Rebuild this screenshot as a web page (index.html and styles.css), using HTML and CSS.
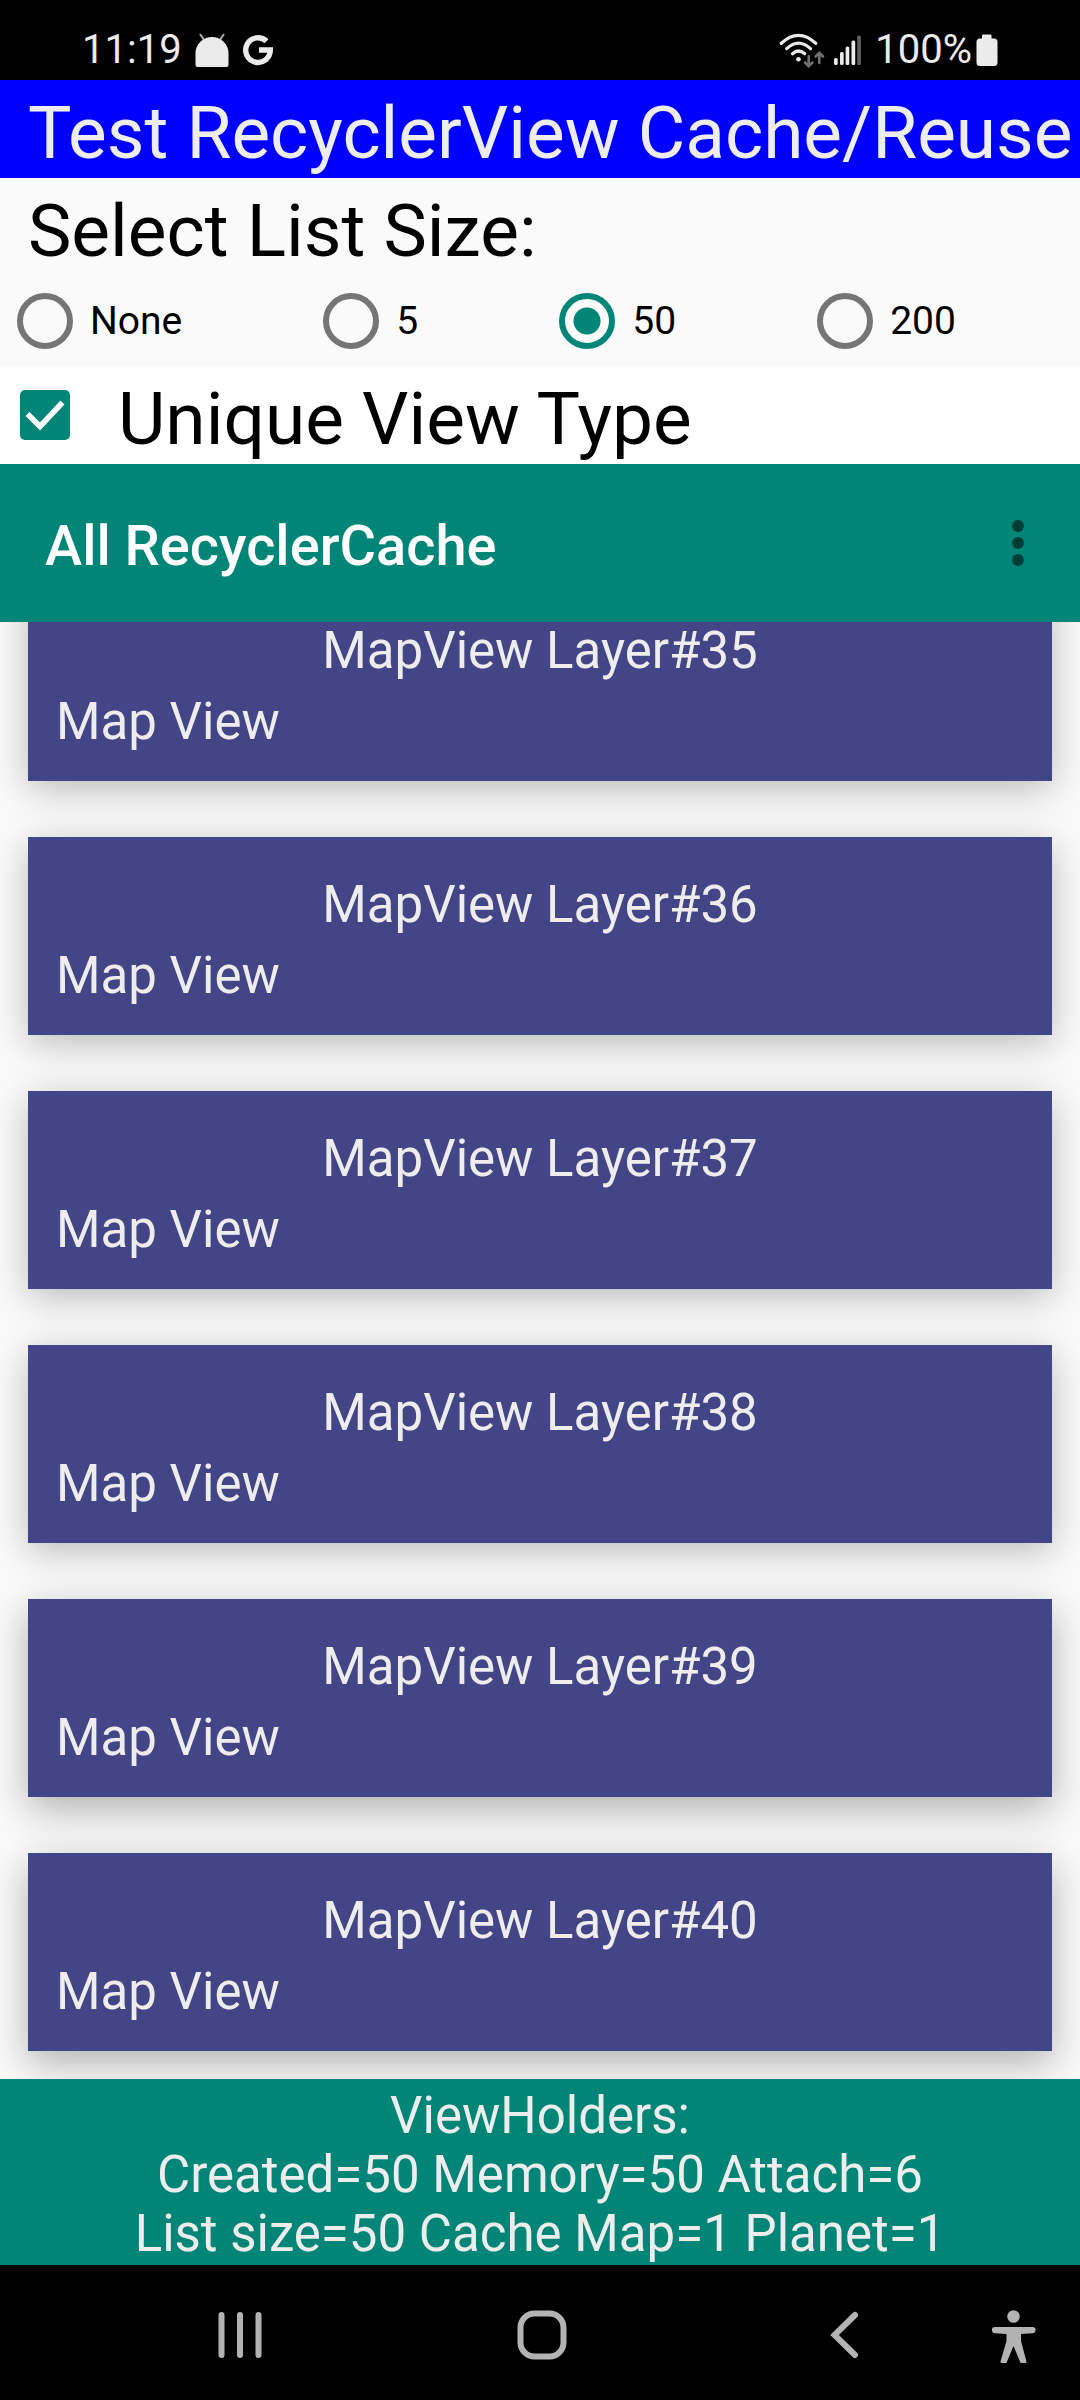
FILE: index.html
```html
<!DOCTYPE html>
<html lang="en">
<head>
<meta charset="utf-8">
<meta name="viewport" content="width=device-width, initial-scale=1">
<title>Test RecyclerView Cache/Reuse</title>
<link rel="stylesheet" href="styles.css">
</head>
<body>
<div class="status-bar">
  <div class="status-group">
    <span class="clock">11:19</span>
    <svg class="android-icon" width="36" height="36" viewBox="0 0 36 36" aria-hidden="true">
      <path d="M6 2l4 6M30 2l-4 6" stroke="#a8a8a8" stroke-width="2" fill="none"/>
      <path d="M1.500 33V21a16.500 16 0 0 1 33 0v12q0 2-2 2h-29q-2 0-2-2z" fill="#ebebeb"/>
    </svg>
    <svg class="google-icon" width="32" height="32" viewBox="0 0 32 32" aria-hidden="true">
      <path d="M24.500 7.200A12.300 12.300 0 1 0 28.300 16H17" fill="none" stroke="#ebebeb" stroke-width="5.400"/>
    </svg>
  </div>
  <div class="status-group">
    <svg class="wifi-icon" width="48" height="38" viewBox="0 0 48 38" fill="none" stroke-linecap="round" aria-hidden="true">
      <g stroke="#ebebeb" stroke-width="3.200">
        <path d="M3.300 12.300Q20.500-3.500 37.700 12.300"/>
        <path d="M8.700 17.700Q20.500 6.500 32.500 17.700"/>
        <path d="M14.500 22.700Q20.500 17.300 26.700 22.700"/>
      </g>
      <circle cx="20.500" cy="28.300" r="2.300" fill="#ebebeb"/>
      <path d="M30.700 25v10M27 31.500l3.700 3.700 3.700-3.700M41.300 32V22M37.600 25.500l3.700-3.700 3.700 3.700" stroke="#707070" stroke-width="2.600"/>
    </svg>
    <svg class="signal-icon" width="28" height="38" viewBox="0 0 28 38" aria-hidden="true">
      <g fill="#ebebeb">
        <rect x="0" y="27" width="3.700" height="7" rx="1.500"/>
        <rect x="6" y="21" width="3.700" height="13" rx="1.500"/>
        <rect x="11.600" y="15.500" width="3.700" height="18.500" rx="1.500"/>
        <rect x="17.500" y="9.500" width="3.700" height="24.500" rx="1.500"/>
      </g>
      <rect x="23.200" y="4.500" width="3.700" height="29.500" rx="1.500" fill="#606060"/>
    </svg>
    <span class="battery-text">100%</span>
    <svg class="battery-icon" width="22" height="34" viewBox="0 0 22 34" aria-hidden="true">
      <path d="M7 1.500h7.500q1 0 1 1v3H18q3.500 0 3.500 3.500v20.500q0 3.500-3.500 3.500H4Q.5 33 .5 29.500V9Q.5 5.500 4 5.500h2v-3q0-1 1-1z" fill="#ebebeb"/>
    </svg>
  </div>
</div>

<h1 class="title">Test RecyclerView Cache/Reuse</h1>

<fieldset class="size-picker">
  <legend class="heading">Select List Size:</legend>
  <div class="radio-row">
    <label class="radio"><input type="radio" name="size">None</label>
    <label class="radio"><input type="radio" name="size">5</label>
    <label class="radio"><input type="radio" name="size" checked>50</label>
    <label class="radio"><input type="radio" name="size">200</label>
  </div>
</fieldset>

<label class="unique">
  <span class="check">
    <input type="checkbox" checked>
    <svg width="50" height="50" viewBox="0 0 50 50" aria-hidden="true"><path d="M7.500 24l12.500 12.500L42.500 12.500" fill="none" stroke="#fff" stroke-width="5.500"/></svg>
  </span>
  <span class="unique-text">Unique View Type</span>
</label>

<header class="app-bar">
  <h2 class="app-title">All RecyclerCache</h2>
  <button class="menu-button" type="button" aria-label="More options">
    <svg width="12" height="46" viewBox="0 0 12 46" fill="#003c35" aria-hidden="true"><circle cx="6" cy="6" r="5.900"/><circle cx="6" cy="23" r="5.900"/><circle cx="6" cy="40" r="5.900"/></svg>
  </button>
</header>

<main class="list">
  <article class="card"><h3 class="card-title">MapView Layer#35</h3><p class="card-text">Map View</p></article>
  <article class="card"><h3 class="card-title">MapView Layer#36</h3><p class="card-text">Map View</p></article>
  <article class="card"><h3 class="card-title">MapView Layer#37</h3><p class="card-text">Map View</p></article>
  <article class="card"><h3 class="card-title">MapView Layer#38</h3><p class="card-text">Map View</p></article>
  <article class="card card-low"><h3 class="card-title">MapView Layer#39</h3><p class="card-text">Map View</p></article>
  <article class="card card-low"><h3 class="card-title">MapView Layer#40</h3><p class="card-text">Map View</p></article>
</main>

<footer class="summary">ViewHolders:<br>Created=50 Memory=50 Attach=6<br>List size=50 Cache Map=1 Planet=1</footer>

<nav class="nav-bar" aria-label="System">
  <div class="nav-main">
    <button class="nav-button" type="button" aria-label="Recent apps">
      <svg width="56" height="56" viewBox="0 0 56 56" aria-hidden="true"><path d="M9.500 8v40M28 8v40M46.500 8v40" stroke="#b3b3b3" stroke-width="6" stroke-linecap="round"/></svg>
    </button>
    <button class="nav-button" type="button" aria-label="Home">
      <svg width="56" height="56" viewBox="0 0 56 56" aria-hidden="true"><rect x="6.500" y="6.500" width="43" height="43" rx="14" fill="none" stroke="#b3b3b3" stroke-width="6"/></svg>
    </button>
    <button class="nav-button" type="button" aria-label="Back">
      <svg width="56" height="56" viewBox="0 0 56 56" aria-hidden="true"><path d="M39 8L18.500 28 39 48" fill="none" stroke="#b3b3b3" stroke-width="6" stroke-linecap="round"/></svg>
    </button>
  </div>
  <button class="nav-button" type="button" aria-label="Accessibility">
    <svg width="56" height="56" viewBox="0 0 56 56" fill="#b3b3b3" aria-hidden="true">
      <circle cx="28.500" cy="9.500" r="6.300"/>
      <path d="M10 20h37.500a3 3 0 0 1 0 6.200L36 27v7l5.200 19.500a3 3 0 0 1-5.800 2L28.500 39 21.600 55.500a3 3 0 0 1-5.800-2L21.500 34v-7L10 26.200a3 3 0 0 1 0-6.200z"/>
    </svg>
  </button>
</nav>
</body>
</html>
```
FILE: styles.css
```css
* {
  box-sizing: border-box;
}

body {
  margin: 0;
  height: 100vh;
  display: flex;
  flex-direction: column;
  background: #fafafa;
  color: #000;
  font-family: Roboto, "Liberation Sans", sans-serif;
  overflow: hidden;
}

body > * {
  flex: none;
}

svg {
  display: block;
}

h1, h2, h3, p {
  margin: 0;
  font-weight: 400;
}

button {
  border: 0;
  padding: 0;
  background: none;
}

/* System status bar */
.status-bar {
  height: 80px;
  padding: 20px 82px 0;
  display: flex;
  justify-content: space-between;
  background: #000;
  color: #ebebeb;
  font-size: 40px;
  line-height: 58px;
}

.status-group {
  display: flex;
  align-items: center;
}

.android-icon { margin-left: 12px; }
.google-icon { margin-left: 12px; }
.signal-icon { margin-left: 8px; }
.battery-text { margin-left: 13px; }
.battery-icon { margin-left: 4px; }

/* Page header */
.title,
.heading,
.unique-text {
  padding: 8px 0 0;
  font-size: 73px;
  line-height: 90px;
  white-space: nowrap;
}

.title {
  padding-left: 28px;
  background: #00f;
  color: #ededed;
  overflow: hidden;
}

/* List size */
.size-picker {
  margin: 0;
  padding: 0;
  border: 0;
  min-width: 0;
}

.heading {
  padding-left: 28px;
}

.radio-row {
  height: 90px;
  display: flex;
}

.radio {
  flex: 1 1 auto;
  display: flex;
  align-items: center;
  gap: 17px;
  padding-left: 17px;
  font-size: 39px;
  line-height: 48px;
}

.radio input {
  appearance: none;
  width: 56px;
  height: 56px;
  margin: 0;
  border: 6px solid #757575;
  border-radius: 50%;
}

.radio input:checked {
  border-color: #008577;
  background: radial-gradient(circle, #008577 13px, transparent 14px);
}

/* Unique view type */
.unique {
  display: flex;
  align-items: center;
  gap: 48px;
  padding-left: 20px;
  background: #fff;
}

.check {
  display: grid;
}

.check input,
.check svg {
  grid-area: 1 / 1;
}

.check input {
  appearance: none;
  width: 50px;
  height: 50px;
  margin: 0;
  border-radius: 5px;
  background: #008577;
}

/* App bar */
.app-bar {
  height: 158px;
  padding: 0 56px 0 45px;
  display: flex;
  align-items: center;
  justify-content: space-between;
  background: #008577;
}

.app-title {
  padding-top: 6px;
  color: #fff;
  font-size: 56px;
  font-weight: 500;
  line-height: 66px;
}

/* Card list, scrolled so that its last card is at the bottom */
.list {
  flex: 1 1 0;
  min-height: 0;
  padding: 0 28px 28px;
  display: flex;
  flex-direction: column;
  justify-content: flex-end;
  gap: 56px;
  overflow: hidden;
}

.card {
  flex: none;
  padding: 32px 28px 24px;
  background: #444587;
  color: #ededed;
  box-shadow: 0 8px 36px rgba(0, 0, 0, 0.26);
}

.card-low {
  box-shadow: 0 12px 38px rgba(0, 0, 0, 0.3);
}

.card-title,
.card-text {
  font-size: 51px;
  line-height: 71px;
}

.card-title {
  text-align: center;
}

/* Summary */
.summary {
  padding: 7px 0 2px;
  background: #008577;
  color: #ededed;
  font-size: 51px;
  line-height: 59px;
  text-align: center;
}

/* System navigation */
.nav-bar {
  height: 135px;
  padding: 5px 39px 0 212px;
  display: flex;
  align-items: center;
  gap: 113px;
  background: #000;
}

.nav-main {
  flex: 1;
  display: flex;
  justify-content: space-between;
}
```
